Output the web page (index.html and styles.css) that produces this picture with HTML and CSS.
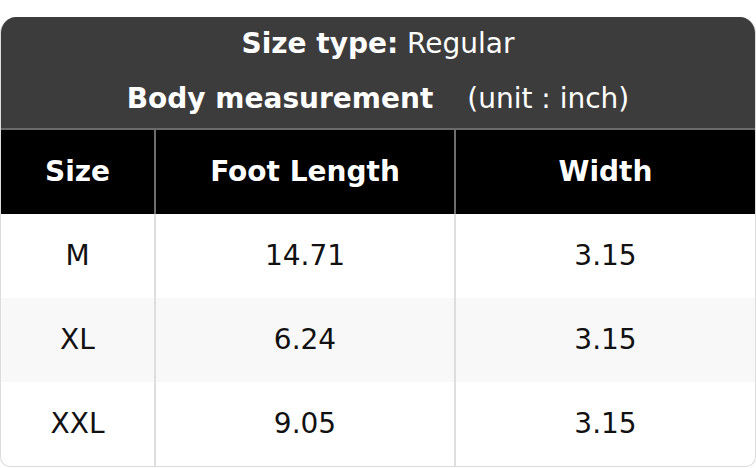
FILE: index.html
```html
<!DOCTYPE html>
<html>
<head>
<meta charset="utf-8">
<link rel="stylesheet" href="styles.css">
</head>
<body>
<div class="page">
  <div class="card">
    <div class="caption">
      <div class="cap-line"><b>Size type:</b> Regular</div>
      <div class="cap-line"><b>Body measurement</b><span class="unit">(unit : inch)</span></div>
    </div>
    <table class="sizes">
      <colgroup><col class="c1"><col class="c2"><col class="c3"></colgroup>
      <thead>
        <tr><th>Size</th><th>Foot Length</th><th>Width</th></tr>
      </thead>
      <tbody>
        <tr><td>M</td><td>14.71</td><td>3.15</td></tr>
        <tr class="alt"><td>XL</td><td>6.24</td><td>3.15</td></tr>
        <tr><td>XXL</td><td>9.05</td><td>3.15</td></tr>
      </tbody>
    </table>
  </div>
</div>
</body>
</html>
```
FILE: styles.css
```css
html, body { margin: 0; padding: 0; background: #fff; }
body { font-family: "DejaVu Sans", Verdana, sans-serif; }
.page { padding-top: 17px; width: 756px; }
.card {
  width: 756px;
  box-sizing: border-box;
  border: 1px solid #dcdcdc;
  border-top: none;
  border-radius: 16px 16px 10px 10px;
  overflow: hidden;
}
.caption {
  background: #3c3c3c;
  color: #fff;
  font-size: 28px;
  text-align: center;
  border-bottom: 2px solid #6a6a6a;
}
.cap-line { height: 56px; line-height: 54px; }
.cap-line:first-child { height: 55px; }
.unit { margin-left: 34px; }
.sizes {
  width: 100%;
  border-collapse: collapse;
  table-layout: fixed;
  font-size: 28px;
}
.c1 { width: 154px; }
.c2 { width: 300px; }
th {
  background: #000;
  color: #fff;
  font-weight: bold;
  height: 84px;
  line-height: 80px;
  padding: 0;
  border-left: 2px solid #6e6e6e;
}
th:first-child { border-left: none; }
td {
  height: 84px;
  line-height: 80px;
  padding: 0;
  text-align: center;
  color: #111;
  border-left: 2px solid #dedede;
}
td:first-child { border-left: none; }
tr.alt td { background: #f8f8f8; }
```
